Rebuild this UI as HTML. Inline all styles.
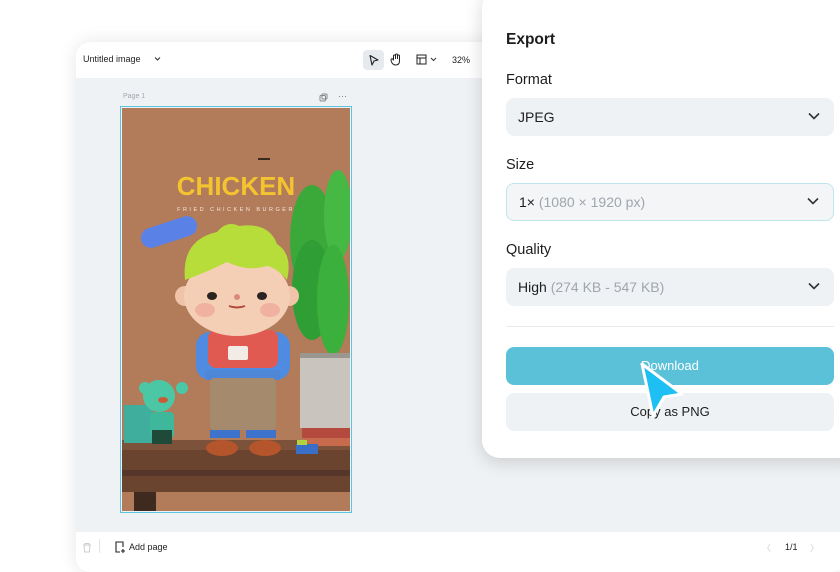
<!DOCTYPE html>
<html><head><meta charset="utf-8"><style>
*{margin:0;padding:0;box-sizing:border-box}
body{width:840px;height:560px;overflow:hidden;background:#fff;font-family:"Liberation Sans",sans-serif;position:relative;color:#1d1d1f}
.win{position:absolute;left:76px;top:42px;width:770px;height:530px;background:#eff2f5;border-radius:14px;box-shadow:0 0 18px rgba(0,0,0,.10);overflow:hidden}
.top{position:absolute;left:0;top:0;right:0;height:36px;background:#fff}
.bot{position:absolute;left:0;top:490px;right:0;height:40px;background:#fff}
.panel{position:absolute;left:482px;top:-10px;width:380px;height:468px;background:#fff;border-radius:18px;box-shadow:0 4px 18px rgba(0,0,0,.16)}
.lbl{position:absolute;left:24px;font-size:14.5px;color:#1d1d1f}
.sel{position:absolute;left:24px;width:328px;height:38px;background:#eff2f5;border-radius:8px;font-size:14px;padding-left:12px;line-height:38px}
.sel svg{position:absolute;right:14px;top:14px}
.g{color:#a0a6ad}
</style></head><body>
<div class="win">
 <div class="top">
  <div style="position:absolute;left:7px;top:12px;font-size:9px">Untitled image</div>
  <svg style="position:absolute;left:78px;top:14px" width="7" height="6"><path d="M1 1.5l2.5 2.5 2.5-2.5" stroke="#333" fill="none" stroke-width="1.1"/></svg>
  <div style="position:absolute;left:287px;top:8px;width:21px;height:20px;background:#e6eaee;border-radius:4px"></div>
  <svg style="position:absolute;left:292px;top:12px" width="11" height="12"><path d="M2 1.5l8 4.5-4 1-2 4z" stroke="#222" fill="none" stroke-width="1.1" stroke-linejoin="round"/></svg>
  <svg style="position:absolute;left:314px;top:11px" width="12" height="13"><path d="M3.5 7V3a1 1 0 012 0v3M5.5 6V2a1 1 0 012 0v4M7.5 6V3a1 1 0 012 0v5c0 3-2 4-4 4s-3-1-4-3L1 7a1 1 0 012-.5l.5 1" stroke="#222" fill="none" stroke-width="1"/></svg>
  <svg style="position:absolute;left:340px;top:12px" width="11" height="11"><rect x="1" y="1" width="9" height="9" stroke="#222" fill="none" stroke-width="1"/><path d="M1 4h9M4 4v6" stroke="#222" stroke-width="1"/></svg>
  <svg style="position:absolute;left:354px;top:15px" width="7" height="5"><path d="M1 1l2.5 2.5 2.5-2.5" stroke="#333" fill="none" stroke-width="1"/></svg>
  <div style="position:absolute;left:376px;top:13px;font-size:9px">32%</div>
 </div>
 <div style="position:absolute;left:47px;top:51px;font-size:7px;color:#a0a6ad">Page 1</div>
 <svg style="position:absolute;left:243px;top:51px" width="9" height="9"><rect x="1" y="2.5" width="5.5" height="5.5" rx="1" stroke="#888" fill="none"/><rect x="3" y="1" width="5" height="5" rx="1" stroke="#888" fill="none"/></svg>
 <div style="position:absolute;left:262px;top:49px;font-size:9px;color:#777">···</div>
 <div style="position:absolute;left:44px;top:64px;width:232px;height:407px;border:1.5px solid #5cc4dc"></div>
 <svg style="position:absolute;left:46px;top:66px" width="228" height="403" viewBox="122 108 228 403">
  <rect x="122" y="108" width="228" height="403" fill="#b27b5a"/>
  <rect x="122" y="440" width="228" height="52" fill="#6b4430"/>
  <rect x="122" y="440" width="228" height="10" fill="#7d523b"/>
  <rect x="122" y="470" width="228" height="6" fill="#56362a"/>
  <rect x="134" y="492" width="22" height="19" fill="#3f2a20"/>
  <ellipse cx="312" cy="240" rx="22" ry="55" fill="#3ba83a"/>
  <ellipse cx="338" cy="215" rx="14" ry="45" fill="#46b844"/>
  <ellipse cx="312" cy="290" rx="20" ry="50" fill="#2f9e35"/>
  <ellipse cx="333" cy="300" rx="16" ry="55" fill="#3cb03c"/>
  <rect x="300" y="353" width="50" height="75" fill="#c9c4be"/>
  <rect x="300" y="353" width="50" height="5" fill="#9a9690"/>
  <rect x="302" y="428" width="48" height="10" fill="#b34a3d"/>
  <rect x="304" y="438" width="46" height="8" fill="#c86b4d"/>
  <rect x="296" y="444" width="22" height="10" fill="#3a6fc8"/>
  <rect x="297" y="440" width="10" height="5" fill="#b4d13f"/>
  <rect x="140" y="222" width="58" height="20" rx="10" transform="rotate(-18 169 232)" fill="#5a82e6"/>
  <rect x="124" y="405" width="28" height="38" fill="#3fae9c"/>
  <circle cx="159" cy="396" r="16" fill="#4cc7a5"/>
  <circle cx="145" cy="388" r="6" fill="#4cc7a5"/><circle cx="182" cy="388" r="6" fill="#4cc7a5"/>
  <ellipse cx="163" cy="400" rx="5" ry="3" fill="#c95a34"/>
  <rect x="150" y="412" width="24" height="26" rx="4" fill="#3fb79a"/>
  <rect x="152" y="430" width="20" height="14" fill="#1f4a3a"/>
  <rect x="196" y="332" width="94" height="48" rx="14" fill="#4f8be0"/>
  <rect x="208" y="330" width="70" height="38" rx="8" fill="#e05a52"/>
  <rect x="228" y="346" width="20" height="14" rx="2" fill="#f3ece6"/>
  <rect x="206" y="370" width="74" height="10" fill="#4e86d8"/>
  <rect x="210" y="378" width="66" height="52" rx="4" fill="#a58a6e"/>
  <rect x="210" y="430" width="30" height="8" fill="#3d73cc"/><rect x="246" y="430" width="30" height="8" fill="#3d73cc"/>
  <ellipse cx="222" cy="448" rx="16" ry="8" fill="#b4552c"/><ellipse cx="265" cy="448" rx="16" ry="8" fill="#b4552c"/>
  <circle cx="185" cy="296" r="10" fill="#efc4a8"/><circle cx="289" cy="296" r="10" fill="#efc4a8"/>
  <ellipse cx="237" cy="296" rx="53" ry="40" fill="#f4cfb5"/>
  <ellipse cx="205" cy="310" rx="10" ry="7" fill="#ef9d93" opacity=".6"/><ellipse cx="270" cy="310" rx="10" ry="7" fill="#ef9d93" opacity=".6"/>
  <ellipse cx="212" cy="296" rx="5" ry="4" fill="#2a2520"/><ellipse cx="262" cy="296" rx="5" ry="4" fill="#2a2520"/>
  <circle cx="237" cy="297" r="3" fill="#d98a78"/>
  <path d="M229 306q8 3 16 0" stroke="#b04a3a" stroke-width="2" fill="none"/>
  <path d="M185 280q-4-40 32-48q10-12 22-6q30-4 38 18q16 10 10 36q-10-12-20-14q-20 6-40-4q-20 10-42 18z" fill="#b7dd3a"/>
  <text x="236" y="195" text-anchor="middle" font-family="Liberation Sans" font-weight="bold" font-size="26" fill="#f3c42f">CHICKEN</text>
  <text x="236" y="211" text-anchor="middle" font-family="Liberation Sans" font-size="5.5" letter-spacing="2.5" fill="#f4e8dc">FRIED CHICKEN BURGER</text>
  <rect x="258" y="158" width="12" height="2" fill="#3a2a20"/>
 </svg>
 <div class="bot">
  <svg style="position:absolute;left:6px;top:10px" width="10" height="11"><path d="M1 3h8M3 3V1.5h4V3M2 3l.7 7h4.6L8 3" stroke="#ccc" fill="none"/></svg>
  <div style="position:absolute;left:23px;top:7px;width:1px;height:14px;background:#e3e3e3"></div>
  <svg style="position:absolute;left:38px;top:9px" width="12" height="13"><path d="M6 11H2V1h7v5" stroke="#222" fill="none" stroke-width="1.1"/><path d="M9 8v4M7 10h4" stroke="#222" stroke-width="1.1"/></svg>
  <div style="position:absolute;left:53px;top:10px;font-size:9px">Add page</div>
  <div style="position:absolute;left:686px;top:9px;font-size:9px;color:#ccc">〈</div>
  <div style="position:absolute;left:709px;top:10px;font-size:9px">1/1</div>
  <div style="position:absolute;left:734px;top:9px;font-size:9px;color:#ccc">〉</div>
 </div>
</div>
<div class="panel">
 <div style="position:absolute;left:24px;top:41px;font-size:15.5px;font-weight:bold">Export</div>
 <div class="lbl" style="top:82px">Format</div>
 <div class="sel" style="top:108px">JPEG<svg width="12" height="8"><path d="M1 1.5l5 5 5-5" stroke="#333" fill="none" stroke-width="1.6"/></svg></div>
 <div class="lbl" style="top:167px">Size</div>
 <div class="sel" style="top:193px;background:#f3f5f7;border:1px solid #bfe6ef;line-height:36px">1× <span class="g">(1080 × 1920 px)</span><svg width="12" height="8" style="top:13px"><path d="M1 1.5l5 5 5-5" stroke="#333" fill="none" stroke-width="1.6"/></svg></div>
 <div class="lbl" style="top:252px">Quality</div>
 <div class="sel" style="top:278px">High <span class="g">(274 KB - 547 KB)</span><svg width="12" height="8"><path d="M1 1.5l5 5 5-5" stroke="#333" fill="none" stroke-width="1.6"/></svg></div>
 <div style="position:absolute;left:24px;top:336px;width:328px;height:1px;background:#e8eaec"></div>
 <div style="position:absolute;left:24px;top:357px;width:328px;height:38px;background:#5bc1d8;border-radius:8px;color:#fff;font-size:13px;text-align:center;line-height:38px">Download</div>
 <div style="position:absolute;left:24px;top:403px;width:328px;height:38px;background:#eff2f5;border-radius:8px;font-size:13px;text-align:center;line-height:38px">Copy as PNG</div>
</div>
<svg style="position:absolute;left:636px;top:358px" width="56" height="66"><path d="M6 6l40 30-18 3-11 19z" fill="#1ec0f3" stroke="#fff" stroke-width="3" stroke-linejoin="round"/></svg>
</body></html>
